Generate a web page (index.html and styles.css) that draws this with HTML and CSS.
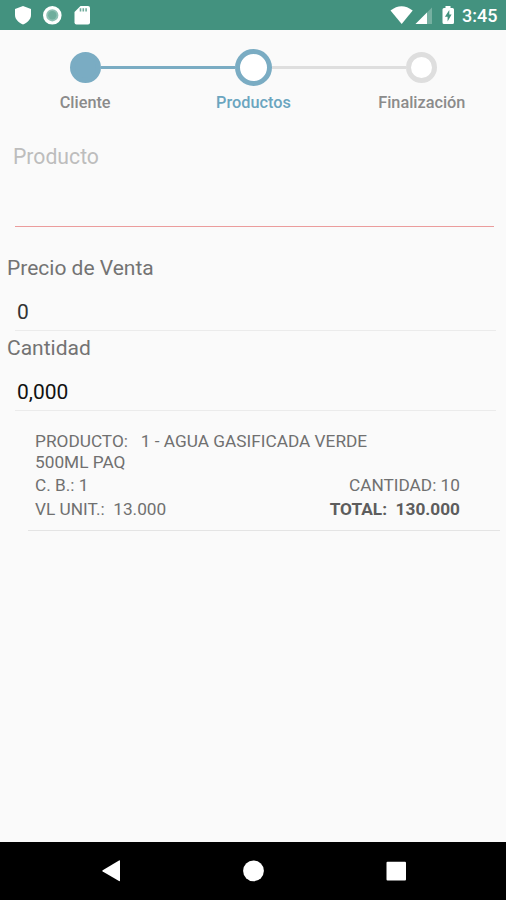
FILE: index.html
```html
<!DOCTYPE html>
<html lang="es">
<head>
<meta charset="utf-8">
<title>Productos</title>
<link rel="stylesheet" href="styles.css">
</head>
<body>
<header class="status">
  <svg class="status-left" width="100" height="30" viewBox="0 0 100 30">
    <path fill="#fff" d="M23 6l8 3v6c0 4-3.300 7.500-8 9.500-4.700-2-8-5.500-8-9.500V9z"/>
    <circle cx="52.300" cy="15.300" r="7.700" fill="#8fc1b4" stroke="#fff" stroke-width="3.200"/>
    <circle cx="52.300" cy="15.300" r="4.200" fill="#6fae9d"/>
    <path fill="#fff" d="M80.500 6H88q2 0 2 2v14.500q0 2-2 2H76.500q-2 0-2-2V12z"/>
    <path stroke="#6fab9b" stroke-width="1.600" d="M80.500 8.200v3.400M83.300 8.200v3.400M86.100 8.200v3.400"/>
  </svg>
  <svg class="status-right" width="70" height="30" viewBox="388 0 70 30">
    <path fill="#fff" d="M390.500 10.500Q401.500 2 412.700 10.500L401.700 24z"/>
    <path fill="#76b0a1" d="M432 7.500V24H415.500z"/>
    <path fill="#fff" d="M427 12.500V24H415.500z"/>
    <path fill="#fff" d="M445.500 6h5v2h2q1.500 0 1.500 1.500v13q0 1.500-1.500 1.500h-8.500q-1.500 0-1.500-1.500v-13q0-1.500 1.500-1.500h1.500z"/>
    <path fill="#43927f" d="M449.300 10l-4.400 6.700h2.700v4.800l4-7h-2.300z"/>
  </svg>
  <span class="clock">3:45</span>
</header>
<main class="screen">
  <ol class="stepper">
    <li class="step done"><span class="track"><i class="dot"></i></span><span class="step-label">Cliente</span></li>
    <li class="step current"><span class="track"><i class="dot"></i></span><span class="step-label">Productos</span></li>
    <li class="step"><span class="track"><i class="dot"></i></span><span class="step-label">Finalización</span></li>
  </ol>
  <div class="product-field">Producto</div>
  <div class="field">
    <div class="label">Precio de Venta</div>
    <div class="value">0</div>
  </div>
  <div class="field">
    <div class="label">Cantidad</div>
    <div class="value amount">0,000</div>
  </div>
  <section class="item">
    <div class="item-name">PRODUCTO: &nbsp; 1 - AGUA GASIFICADA VERDE<br>500ML PAQ</div>
    <div class="item-row"><span>C. B.: 1</span><span>CANTIDAD: 10</span></div>
    <div class="item-row"><span>VL UNIT.: &nbsp;13.000</span><b>TOTAL: &nbsp;130.000</b></div>
  </section>
</main>
<nav class="navbar">
  <svg width="506" height="58" viewBox="0 0 506 58">
    <path fill="#fff" d="M120 19v19.500q0 1-1 .5L102.700 29.600q-1-.7 0-1.400L119 18.500q1-.5 1 .5z"/>
    <circle cx="253.500" cy="28.800" r="10.400" fill="#fff"/>
    <rect x="386.500" y="19.800" width="19.500" height="18.700" rx="1" fill="#fff"/>
  </svg>
</nav>
</body>
</html>
```
FILE: styles.css
```css
* { box-sizing: border-box; }
body {
  margin: 0;
  height: 900px;
  display: flex;
  flex-direction: column;
  overflow: hidden;
  background: #fafafa;
  font-family: Roboto, sans-serif;
  color: #707070;
}
svg { display: block; }
.status {
  height: 30px;
  flex: none;
  display: flex;
  align-items: center;
  background: #43927f;
}
.status-right { margin-left: 288px; }
.clock {
  margin-left: 4px;
  padding-top: 1px;
  font-size: 18px;
  line-height: 21px;
  font-weight: 500;
  color: #fff;
}
.screen { flex: 1; min-height: 0; }
.stepper {
  display: grid;
  grid-template-columns: repeat(3, 1fr);
  margin: 0;
  padding: 18px 0 0 1px;
  list-style: none;
  height: 110px;
}
.step { --before: #dedede; --after: transparent; text-align: center; }
.track {
  height: 38px;
  display: flex;
  align-items: center;
  justify-content: center;
}
.track::before, .track::after { content: ""; flex: 1; height: 3px; }
.track::before { background: var(--before); }
.track::after { background: var(--after); }
.dot {
  width: 31px;
  height: 31px;
  border-radius: 50%;
  border: 5px solid #dedede;
  background: #fff;
}
.done { --before: transparent; --after: #7aacc3; }
.done .dot { background: #7aacc3; border-color: #7aacc3; }
.current { --before: #7aacc3; --after: #dedede; }
.current .dot { width: 37px; height: 37px; border-color: #7aacc3; }
.step-label {
  display: block;
  margin-top: 7px;
  font-size: 16.300px;
  line-height: 20px;
  font-weight: 500;
  color: #8b8b8b;
}
.current .step-label { color: #6ba5bf; }
.product-field {
  height: 87px;
  margin: 0 12px 0 15px;
  padding-top: 5px;
  border-bottom: 1px solid #eb9c9c;
  font-size: 21.200px;
  line-height: 24px;
  text-indent: -2px;
  color: #bdbdbd;
}
.field { height: 80px; display: flex; flex-direction: column; }
.product-field + .field { height: 104px; padding-top: 24px; }
.label {
  padding: 5px 7px 0;
  font-size: 21px;
  line-height: 24px;
  color: #737373;
}
.value {
  flex: 1;
  margin: 0 10px 0 15px;
  padding: 20px 2px 0;
  border-bottom: 1px solid #ebebeb;
  font-size: 21px;
  line-height: 24px;
  color: #333;
}
.amount { color: #111; }
.item {
  height: 120px;
  margin: 0 6px 0 28px;
  padding: 20px 40px 0 7px;
  border-bottom: 1px solid #e4e4e4;
  font-size: 17.250px;
}
.item-name { height: 42px; line-height: 20.500px; }
.item-row {
  display: flex;
  justify-content: space-between;
  line-height: 24px;
}
.item-row b { font-weight: 700; color: #5d5d5d; }
.navbar { height: 58px; flex: none; background: #000; }
```
